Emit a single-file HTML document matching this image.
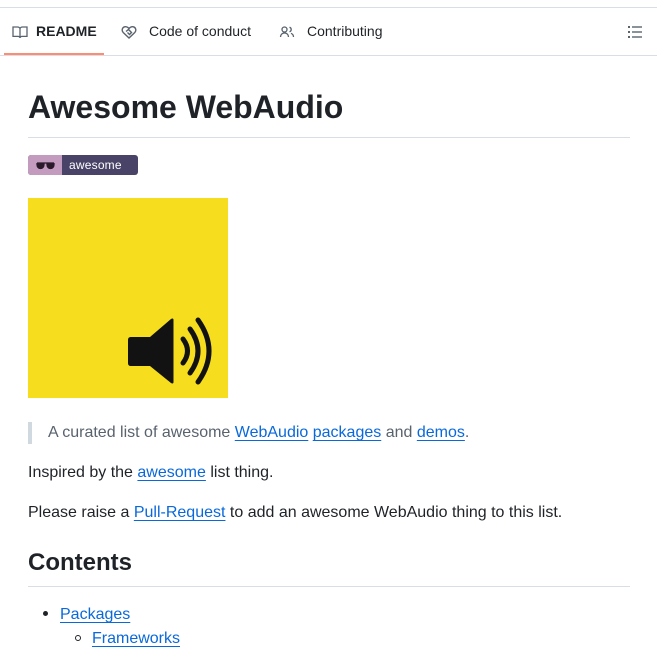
<!DOCTYPE html>
<html><head><meta charset="utf-8"><style>
*{margin:0;padding:0;box-sizing:border-box}
body{width:657px;height:657px;overflow:hidden;background:#fff;font-family:"Liberation Sans",sans-serif;color:#1f2328;position:relative}
.a{position:absolute;white-space:nowrap}
a{color:#0969da;text-decoration:underline;text-underline-offset:3px;text-decoration-thickness:1px}
.tab{font-size:14px;top:23px}
</style></head><body>
<div class="a" style="left:0;top:7px;width:657px;height:1px;background:#d8dee4"></div>
<div class="a" style="left:0;top:55px;width:657px;height:1px;background:#d8dee4"></div>
<div class="a" style="left:4px;top:53px;width:100px;height:2px;background:#fd8c73"></div>
<svg class="a" style="left:12px;top:24px" width="16" height="16" viewBox="0 0 16 16" fill="none" stroke="#59636e" stroke-width="1.3"><path d="M1 3h4.5c1.2 0 2.5.8 2.5 2v9c0-1-1-1.6-2-1.6H1zM15 3h-4.5c-1.2 0-2.5.8-2.5 2v9c0-1 1-1.6 2-1.6H15z"/></svg>
<div class="a tab" style="left:36px;font-weight:bold">README</div>
<svg class="a" style="left:121px;top:24px" width="16" height="16" viewBox="0 0 16 16" fill="none" stroke="#59636e" stroke-width="1.4"><path d="M8 14L2.2 8.5C.5 6.8 1 3.5 3.6 2.8 5.4 2.3 6.8 3.2 8 4.5 9.2 3.2 10.6 2.3 12.4 2.8 15 3.5 15.5 6.8 13.8 8.5z"/><path d="M5 7.5l2.5-2 3 3-2 2-2-2"/></svg>
<div class="a tab" style="left:149px">Code of conduct</div>
<svg class="a" style="left:279px;top:24px" width="16" height="16" viewBox="0 0 16 16" fill="none" stroke="#59636e" stroke-width="1.3"><circle cx="5.5" cy="5.5" r="2.5"/><path d="M1.5 13c0-2.5 1.8-4 4-4s4 1.5 4 4M10.5 3.2a2.4 2.4 0 010 4.6M12 9.3c1.5.6 2.5 1.8 2.5 3.7"/></svg>
<div class="a tab" style="left:307px">Contributing</div>
<svg class="a" style="left:627px;top:25px" width="16" height="14" viewBox="0 0 16 14" fill="#59636e"><rect x="1" y="1" width="2" height="2"/><rect x="1" y="6" width="2" height="2"/><rect x="1" y="11" width="2" height="2"/><rect x="5" y="1.3" width="10" height="1.4"/><rect x="5" y="6.3" width="10" height="1.4"/><rect x="5" y="11.3" width="10" height="1.4"/></svg>

<div class="a" style="left:28px;top:89px;font-size:32px;font-weight:bold">Awesome WebAudio</div>
<div class="a" style="left:28px;top:137px;width:602px;height:1px;background:#d8dee4"></div>

<div class="a" style="left:28px;top:155px;width:110px;height:20px;border-radius:3px;overflow:hidden;background:#494368">
<div style="position:absolute;left:0;top:0;width:34px;height:20px;background:#c39bbf"></div>
<svg style="position:absolute;left:8px;top:6px" width="19" height="9" viewBox="0 0 19 9"><path d="M1 2h17M1 2v1.5c0 2.5 1.5 4 3.5 4S8 6 8 3.5V2M11 2v1.5c0 2.5 1.5 4 3.5 4S18 6 18 3.5V2" fill="#2a1a2a" stroke="#2a1a2a" stroke-width="1.3"/></svg>
<div style="position:absolute;left:41px;top:3px;color:#fff;font-size:12px;letter-spacing:.2px">awesome</div>
</div>

<div class="a" style="left:28px;top:198px;width:200px;height:200px;background:#f6dd1d"></div>
<svg class="a" style="left:28px;top:198px" width="200" height="200" viewBox="0 0 200 200">
<path d="M103 139h19l21-18c1.5-1 2.5-.5 2.5 1v62c0 1.5-1 2-2.5 1l-21-17h-19c-2 0-3-1-3-3v-23c0-2 1-3 3-3z" fill="#121212"/>
<g fill="none" stroke="#121212" stroke-width="5" stroke-linecap="round"><path d="M155 141Q164 153 155 165"/><path d="M162 131Q178 153 162 175"/><path d="M170 122Q192 153 170 184"/></g>
</svg>

<div class="a" style="left:28px;top:422px;width:4px;height:22px;background:#d1d9e0"></div>
<div class="a" style="left:48px;top:424px;font-size:16px;color:#59636e">A curated list of awesome <a href="#">WebAudio</a> <a href="#">packages</a> and <a href="#">demos</a>.</div>
<div class="a" style="left:28px;top:464px;font-size:16px">Inspired by the <a href="#">awesome</a> list thing.</div>
<div class="a" style="left:28px;top:504px;font-size:16px">Please raise a <a href="#">Pull-Request</a> to add an awesome WebAudio thing to this list.</div>
<div class="a" style="left:28px;top:549px;font-size:24px;font-weight:bold">Contents</div>
<div class="a" style="left:28px;top:586px;width:602px;height:1px;background:#d8dee4"></div>
<div class="a" style="left:43px;top:611px;width:5px;height:5px;border-radius:50%;background:#1f2328"></div>
<div class="a" style="left:60px;top:606px;font-size:16px"><a href="#">Packages</a></div>
<div class="a" style="left:75px;top:635px;width:6px;height:6px;border-radius:50%;border:1px solid #1f2328"></div>
<div class="a" style="left:92px;top:630px;font-size:16px"><a href="#">Frameworks</a></div>
</body></html>
